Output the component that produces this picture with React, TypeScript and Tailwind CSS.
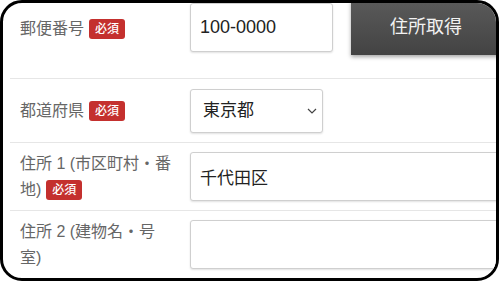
const font = { fontFamily: '"Liberation Sans", "Noto Sans CJK JP", sans-serif' };

function Badge() {
  return (
    <span className="ml-[5px] inline-flex h-[20px] w-[36px] items-center justify-center rounded-[3px] bg-[#c4302e] align-[1px] text-[12px] leading-none font-medium text-white">
      必須
    </span>
  );
}

function Label({ children }: { children: React.ReactNode }) {
  return (
    <div className="w-[166px] shrink-0 whitespace-nowrap pl-[10px] text-[16px] leading-[26px] text-[#666]">{children}</div>
  );
}

const inputCls =
  'h-[49px] shrink-0 rounded-[3px] border border-[#cfcfcf] bg-white px-[9px] text-[17px] text-[#222] shadow-[0_1px_2px_rgba(0,0,0,0.12)] outline-none';

export default function App() {
  return (
    <div className="h-[283px] w-[500px] bg-white" style={font}>
      <div className="h-[281px] w-[499px] overflow-hidden rounded-[22px] border-[3px] border-black bg-white">
        <div className="-mt-[3px] flex flex-col">
          {/* 郵便番号 */}
          <div className="ml-[7px] flex h-[79px] items-start border-b border-[#e6e6e6]">
            <div className="flex h-[58px] items-center">
              <Label>
                郵便番号
                <Badge />
              </Label>
            </div>
            <input readOnly value="100-0000" className={`${inputCls} ml-[14px] mt-[3px] w-[143px] text-[18px]`} />
            <button className="ml-[18px] h-[55px] w-[150px] shrink-0 bg-gradient-to-b from-[#5a5a5a] to-[#434343] text-[18px] text-[#f2f2f2] shadow-[0_2px_4px_rgba(0,0,0,0.35)]">
              住所取得
            </button>
          </div>

          {/* 都道府県 */}
          <div className="ml-[7px] flex h-[64px] items-center border-b border-[#e6e6e6]">
            <Label>
              都道府県
              <Badge />
            </Label>
            <div className="relative ml-[14px] h-[44px] w-[133px] shrink-0">
              <select className="h-full w-full appearance-none rounded-[3px] border border-[#cfcfcf] bg-white pl-[12px] text-[17px] text-[#222] shadow-[0_1px_2px_rgba(0,0,0,0.12)] outline-none">
                <option>東京都</option>
              </select>
              <svg className="pointer-events-none absolute right-[6px] top-[19px]" width="10" height="6" viewBox="0 0 10 6">
                <polyline points="1,1 5,5 9,1" fill="none" stroke="#444" strokeWidth="1.2" />
              </svg>
            </div>
          </div>

          {/* 住所1 */}
          <div className="ml-[7px] flex h-[68px] items-center border-b border-[#e6e6e6]">
            <Label>
              住所 1 (市区町村・番
              <br />
              地)
              <Badge />
            </Label>
            <input readOnly value="千代田区" className={`${inputCls} ml-[14px] w-[340px]`} />
          </div>

          {/* 住所2 */}
          <div className="ml-[7px] flex h-[68px] items-center border-b border-[#e6e6e6]">
            <Label>
              住所 2 (建物名・号
              <br />
              室)
            </Label>
            <input readOnly value="" className={`${inputCls} ml-[14px] w-[340px]`} />
          </div>
        </div>
      </div>
    </div>
  );
}
